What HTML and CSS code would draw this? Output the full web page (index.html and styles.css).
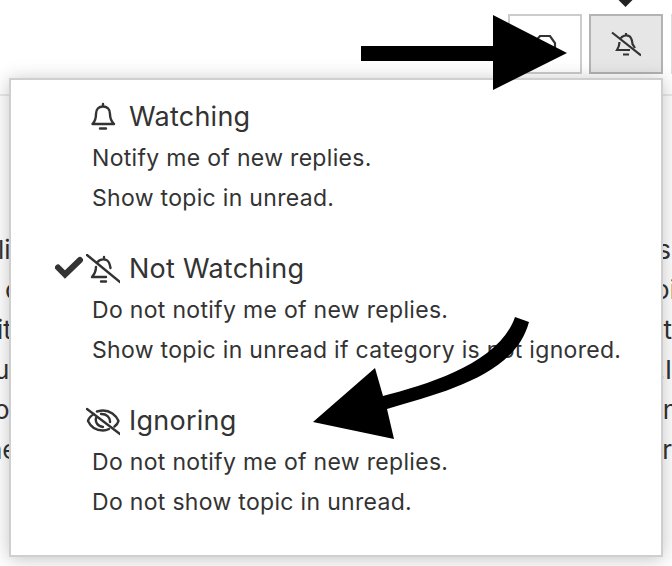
FILE: index.html
```html
<!DOCTYPE html>
<html lang="en">
<head>
<meta charset="utf-8">
<title>Notification level</title>
<link rel="stylesheet" href="styles.css">
</head>
<body>
<div class="page">
  <div class="caret"></div>
  <header class="toolbar">
    <button class="tool">
      <svg class="tool-icon" width="30" height="30" viewBox="0 0 30 30"><path d="M4 14 L10 7 H20 L25 14 V20" /></svg>
    </button>
    <button class="tool tool-active">
      <svg class="tool-icon" width="30" height="30" viewBox="0 0 30 30"><path d="M15 4 V6.500 M9.500 9.500 C11 7 15 5.500 18 7 C21 8.500 21 12 21.500 15 L24 19 M8.500 13 C8.500 16.500 7.500 18.500 6 21 H19 M12 25.500 H18 M1 3.500 L30 26.500"/></svg>
    </button>
    <button class="tool tool-edge"></button>
  </header>
  <div class="backdrop">
    <div class="back-col">
      <p class="back-a">li</p><p class="back-b">c</p><p class="back-c">it</p><p class="back-d">u</p><p class="back-e">o</p><p class="back-f">ne</p>
    </div>
    <div class="back-col back-col-right">
      <p class="back-g">s</p><p class="back-h">oi</p><p class="back-i">t</p><p class="back-j">.I</p><p class="back-k">n</p><p class="back-l">r</p>
    </div>
  </div>
  <section class="menu">
    <div class="item">
      <div class="item-title">
        <span class="check"></span>
        <svg class="level-icon" width="34" height="30" viewBox="0 0 34 30"><path d="M17 2 V4.500 M6.500 22 H28 M6.500 22 C9 19.500 10 16.500 10 12 C10 7 13 4.500 17 4.500 C21 4.500 24 7 24 12 C24 16.500 25.500 19.500 28 22 M14 26.500 H20"/></svg>
        <span>Watching</span>
      </div>
      <p class="desc">Notify me of new replies.</p>
      <p class="desc">Show topic in unread.</p>
    </div>
    <div class="item">
      <div class="item-title">
        <svg class="check" width="31" height="30" viewBox="0 0 31 30"><path class="check-mark" d="M3 13.500 L10 20.500 L25 6"/></svg>
        <svg class="level-icon" width="34" height="30" viewBox="0 0 34 30"><path d="M18 3 V5.500 M11 8.500 C13 6 17 4.500 20.500 6 C23.500 7.500 24 11 24.500 14 M10 13 C10 17 8.500 20 6 23 H20 M15 27.500 H20 M1 1 L34 28"/></svg>
        <span>Not Watching</span>
      </div>
      <p class="desc">Do not notify me of new replies.</p>
      <p class="desc">Show topic in unread if category is not ignored.</p>
    </div>
    <div class="item">
      <div class="item-title">
        <span class="check"></span>
        <svg class="level-icon" width="34" height="30" viewBox="0 0 34 30"><path d="M1 3 L34 28 M8 8 C4.500 10 2.500 13 2 15 C4.500 20.500 10 24.500 17 24.500 C19 24.500 21 24 23 23 M11 5.500 C13 5 15 4.500 17 4.500 C24 4.500 30 9 32.500 15 C32 17 30.500 19 28.500 20.500 M10 12 C9 16 11.500 20.500 17 21 M15 8 C20 7.500 24.500 11.500 24 16"/></svg>
        <span>Ignoring</span>
      </div>
      <p class="desc">Do not notify me of new replies.</p>
      <p class="desc">Do not show topic in unread.</p>
    </div>
  </section>
  <svg class="annotations" width="672" height="566" viewBox="0 0 672 566">
    <path class="arrow-fill" d="M361 46 H493 V15 L567 53 L493 90 V61 H361 Z"/>
    <path class="arrow-fill" d="M375 368 L383 396 C 430 384 500 362 515 317 L529 322 C 515 375 445 392 387 409 L394 439 L313 422 Z"/>
  </svg>
</div>
</body>
</html>
```
FILE: styles.css
```css
* { box-sizing: border-box; }
html, body { margin: 0; padding: 0; background: #fff; }
.page {
  position: relative;
  width: 672px;
  height: 566px;
  overflow: hidden;
  font-family: Inter, "Liberation Sans", sans-serif;
  color: #333;
}
.caret {
  position: absolute;
  left: 618px;
  top: -8px;
  width: 15px;
  height: 15px;
  background: #222;
  clip-path: polygon(50% 0, 100% 50%, 50% 100%, 0 50%);
}
.toolbar {
  display: flex;
  justify-content: flex-end;
  gap: 7px;
  height: 96px;
  padding: 14px 0 0;
  margin-right: -73px;
  border-bottom: 2px solid #eaeaea;
}
.tool {
  display: flex;
  align-items: center;
  justify-content: center;
  flex: none;
  width: 74px;
  height: 60px;
  padding: 0;
  background: #fff;
  border: 2.500px solid #ccc;
}
.tool-active {
  background: #e6e6e6;
  border-color: #b3b3b3;
}
.tool-edge {
  margin-left: 1px;
  border-color: #ddd;
}
.tool-icon path {
  fill: none;
  stroke: #333;
  stroke-width: 2.200;
}
.backdrop {
  display: flex;
  justify-content: space-between;
  padding-top: 134px;
  font-size: 26px;
  line-height: 40px;
}
.back-col p { margin: 0; }
.back-col-right { text-align: right; }
.back-col .back-a { margin-left: -2px; }
.back-col .back-b { margin-left: 5px; }
.back-col .back-c { margin-left: -3px; }
.back-col .back-d { margin-left: -6px; }
.back-col .back-e { margin-left: -6px; }
.back-col .back-f { margin-left: -13px; }
.back-col .back-g { margin-right: 1px; }
.back-col .back-h { margin-right: -4px; }
.back-col .back-k { margin-right: -6px; }
.menu {
  position: absolute;
  left: 9px;
  top: 78px;
  width: 654px;
  height: 479px;
  padding: 17px 0 0 44px;
  background: #fff;
  border: 2px solid #cfcfcf;
  box-shadow: 0 2px 18px rgba(0, 0, 0, 0.24);
}
.item { margin-bottom: 32px; }
.item-title {
  display: flex;
  align-items: center;
  height: 40px;
  font-size: 27px;
  letter-spacing: 0.25px;
  line-height: 40px;
}
.check {
  flex: none;
  display: block;
  width: 31px;
  height: 30px;
}
.check-mark {
  fill: none;
  stroke: #333;
  stroke-width: 6;
  stroke-linecap: round;
  stroke-linejoin: miter;
}
.level-icon {
  flex: none;
  margin-right: 9px;
}
.level-icon path {
  fill: none;
  stroke: #333;
  stroke-width: 2.400;
  stroke-linecap: round;
  stroke-linejoin: round;
}
.desc {
  margin: 0 0 0 37px;
  position: relative;
  top: 1px;
  font-size: 23px;
  letter-spacing: 0.31px;
  line-height: 40px;
  white-space: nowrap;
}
.annotations {
  position: absolute;
  left: 0;
  top: 0;
  pointer-events: none;
}
.arrow-fill { fill: #000; }
```
